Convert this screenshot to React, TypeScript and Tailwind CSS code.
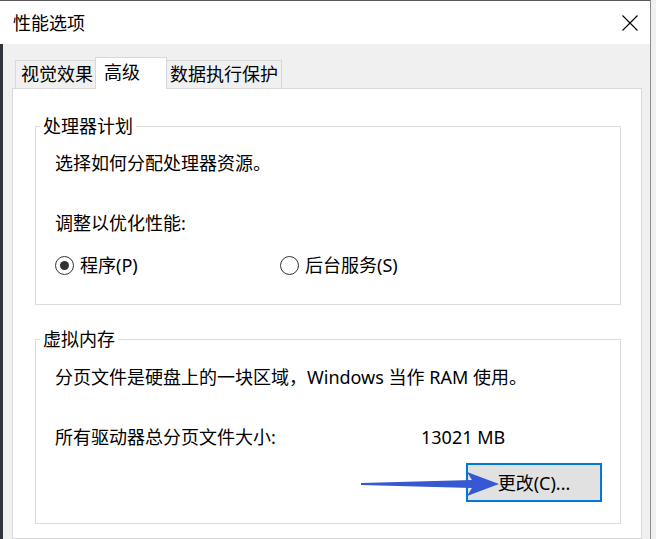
export default function App() {
  return (
    <div className="relative flex h-[539px] w-[656px] overflow-hidden bg-[#f0f0f0] text-black [font-family:'Noto_Sans','Noto_Sans_CJK_SC',sans-serif] text-[18px] leading-[24px]">
      <div className="flex w-[651px] flex-col border-r border-[#8c8c8c]">
        {/* Title bar */}
        <div className="flex h-[44px] items-center justify-between border-t border-[#595959] bg-white pl-[13px] pr-[12px]">
          <span>性能选项</span>
          <svg width="16" height="16" viewBox="0 0 16 16" className="mt-[1px]">
            <path d="M0.5 0.5 L15.5 15.5 M15.5 0.5 L0.5 15.5" stroke="#000" strokeWidth="1.1" fill="none" />
          </svg>
        </div>
        {/* Body */}
        <div className="flex flex-1">
          <div className="w-[3px] bg-[#30343c]" />
          <div className="flex flex-1 flex-col pl-[9px] pr-[8px] pt-[13px]">
            {/* Tabs */}
            <div className="flex items-end pl-[3px]">
              <div className="h-[28px] w-[82px] border-l border-r border-t border-[#d9d9d9] bg-[#f0f0f0] pl-[5px] pt-[1px]">
                视觉效果
              </div>
              <div className="relative z-10 -mx-[2px] -mb-px h-[32px] w-[72px] border-l border-r border-t border-[#d9d9d9] bg-white pl-[8px] pt-[2px]">
                高级
              </div>
              <div className="h-[28px] w-[117px] border-r border-t border-[#d9d9d9] bg-[#f0f0f0] pl-[5px] pt-[1px]">
                数据执行保护
              </div>
            </div>
            {/* Panel */}
            <div className="flex flex-1 flex-col border border-[#d9d9d9] bg-white pl-[22px] pr-[20px] pt-[25px]">
              <fieldset className="border border-[#dcdcdc] p-0">
                <legend className="ml-[4px] px-[3px] leading-[24px]">处理器计划</legend>
                <div className="flex flex-col pl-[19px] pt-[13px] pb-[27px]">
                  <p>选择如何分配处理器资源。</p>
                  <p className="mt-[36px]">调整以优化性能:</p>
                  <div className="mt-[18px] flex">
                    <div className="flex w-[225px] items-center gap-[6px]">
                      <span className="flex h-[19px] w-[19px] items-center justify-center rounded-full border border-[#333333]">
                        <span className="h-[9px] w-[9px] rounded-full bg-[#333333]" />
                      </span>
                      <span>程序(P)</span>
                    </div>
                    <div className="flex items-center gap-[6px]">
                      <span className="h-[19px] w-[19px] rounded-full border border-[#333333]" />
                      <span>后台服务(S)</span>
                    </div>
                  </div>
                </div>
              </fieldset>
              <fieldset className="mt-[22px] border border-[#dcdcdc] p-0">
                <legend className="ml-[4px] px-[3px] leading-[24px]">虚拟内存</legend>
                <div className="flex flex-col pl-[19px] pr-[18px] pt-[14px] pb-[21px]">
                  <p>分页文件是硬盘上的一块区域，Windows 当作 RAM 使用。</p>
                  <div className="mt-[36px] grid grid-cols-[366px_auto]">
                    <span>所有驱动器总分页文件大小:</span>
                    <span>13021 MB</span>
                  </div>
                  <button className="mt-[14px] h-[39px] w-[136px] self-end border-2 border-[#0078d7] bg-[#e1e1e1] pt-[1px] text-center">
                    更改(C)...
                  </button>
                </div>
              </fieldset>
            </div>
          </div>
        </div>
      </div>
      <div className="flex-1 bg-[#f0f0f0]" />
      {/* Annotation arrow */}
      <svg
        className="pointer-events-none absolute left-0 top-0"
        width="656"
        height="539"
        viewBox="0 0 656 539"
      >
        <polygon
          points="361,483 472,480 467,472 499,484 467,496 472,488 361,485"
          fill="#3658d2"
        />
      </svg>
    </div>
  );
}
